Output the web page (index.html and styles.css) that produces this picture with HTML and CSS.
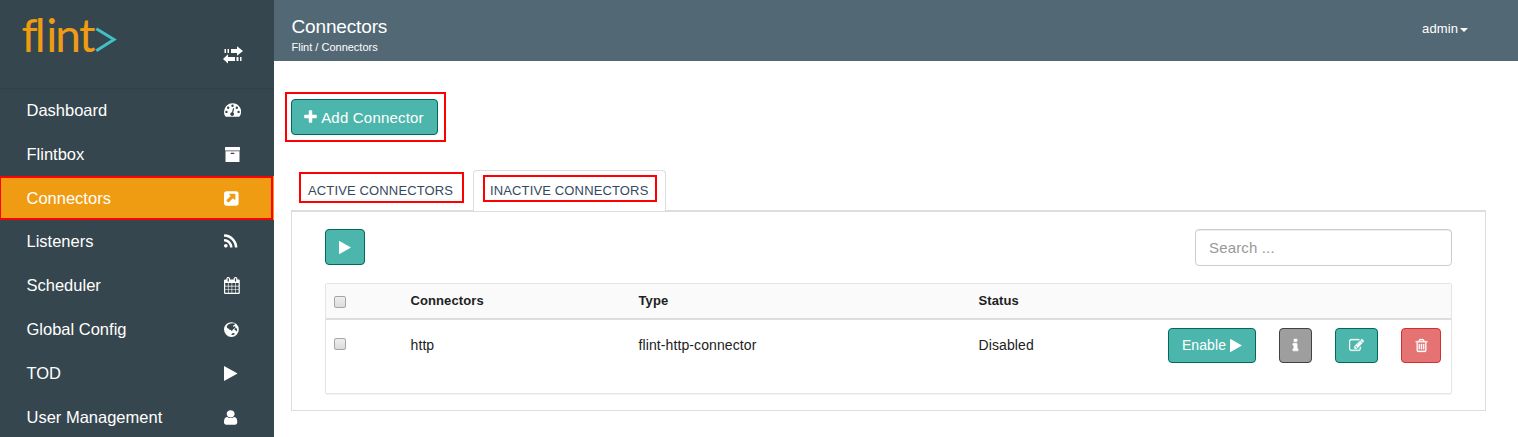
FILE: index.html
```html
<!DOCTYPE html>
<html lang="en">
<head>
<meta charset="utf-8">
<title>Flint - Connectors</title>
<link rel="stylesheet" href="styles.css">
</head>
<body>
<svg class="defs" width="0" height="0">
  <defs>
    <symbol id="play" viewBox="192 0 1792 1792"><path d="M1576 927l-1328 738q-23 13-39.5 3t-16.5-36v-1472q0-26 16.500-36t39.500 3l1328 738q23 13 23 31t-23 31z"/></symbol>
  </defs>
</svg>
<div class="app">
  <aside class="sidebar">
    <div class="brand">
      <svg class="logo" width="100" height="44" viewBox="0 0 100 44">
        <text class="logo-text" x="-0.5 12.800 24.200 33.300 57" y="37">flint</text>
        <path class="logo-mark" d="M74.300 13.800L92 24.500L74.300 35.800"/>
      </svg>
      <svg class="toggle" width="20" height="17" viewBox="0 0 20 17">
        <path d="M1.500 3h1.500v4h-1.500zM4.500 3h1.500v4h-1.500zM8 3h6V.3L20 5l-6 4.700V7H8zM18.500 11h-1.500v4h1.500zM15.500 11h-2v4h2zM12 11H5V8.300L0 13 5 17.500V15h7z"/>
      </svg>
    </div>
    <nav class="menu">
      <a class="item">Dashboard
        <svg class="icon" viewBox="0 0 17 17"><path fill-rule="evenodd" d="M8.500 1.200A8.500 8.500 0 0 0 0 9.700c0 1.600.45 3.250 1.300 4.600.15.250.35.400.7.400h13c.35 0 .55-.15.700-.400A8.500 8.500 0 0 0 8.500 1.200zM2.400 8.700a1.200 1.200 0 1 1 0 2.400 1.200 1.200 0 0 1 0-2.400zM4.200 4.500a1.200 1.200 0 1 1 0 2.400 1.200 1.200 0 0 1 0-2.400zM8.500 2.600a1.200 1.200 0 1 1 0 2.400 1.200 1.200 0 0 1 0-2.400zM12.800 4.500a1.200 1.200 0 1 1 0 2.400 1.200 1.200 0 0 1 0-2.400zM14.600 8.700a1.200 1.200 0 1 1 0 2.400 1.200 1.200 0 0 1 0-2.400zM9.700 6.200c.35.080.5.350.4.700l-.9 3.600a1.900 1.900 0 1 1-1.200-.3l.95-3.600c.1-.35.400-.5.750-.4z"/></svg></a>
      <a class="item">Flintbox
        <svg class="icon" viewBox="0 0 17 17"><path fill-rule="evenodd" d="M1.500 1h14a.5.500 0 0 1 .5.500V4.600H1V1.500A.5.500 0 0 1 1.500 1zM1.500 5.200h14v10.300a.5.500 0 0 1-.5.500H2a.5.500 0 0 1-.5-.5zM7.200 6.800a.6.600 0 0 0 0 1.200h2.600a.6.600 0 0 0 0-1.200z"/></svg></a>
      <a class="item active">Connectors
        <svg class="icon" viewBox="0 0 17 17"><path fill-rule="evenodd" d="M2.700 1.200h9.200a2.700 2.700 0 0 1 2.700 2.700v9.200a2.700 2.700 0 0 1-2.700 2.700H2.700A2.700 2.700 0 0 1 0 13.100V3.900a2.700 2.700 0 0 1 2.700-2.700zM5.800 3.700c-.6 0-.8.6-.4 1l1.300 1.300L2.600 10.100c-.25.250-.25.600 0 .85l1.400 1.400c.25.250.6.250.85 0L9 8.200l1.300 1.300c.4.400 1.100.2 1.100-.4V4.300c0-.35-.25-.6-.6-.6z"/></svg></a>
      <a class="item">Listeners
        <svg class="icon" viewBox="192 0 1792 1792"><path d="M576 1344q0 80-56 136t-136 56-136-56-56-136 56-136 136-56 136 56 56 136zm512 123q2 28-17 48-18 21-47 21h-135q-25 0-43-16.500t-20-41.500q-22-229-184.500-391.500t-391.500-184.500q-25-2-41.500-20t-16.500-43v-135q0-29 21-47 17-17 43-17h5q160 13 306 80.500t259 181.500q114 113 181.500 259t80.500 306zm512 2q2 27-18 47-18 20-46 20h-143q-26 0-44.500-17.500t-19.500-42.500q-12-215-101-408.500t-231.500-336-336-231.500-408.500-102q-25-1-42.500-19.500t-17.500-43.500v-143q0-28 20-46 18-18 44-18h3q262 13 501.500 120t425.500 294q187 186 294 425.500t120 501.500z"/></svg></a>
      <a class="item">Scheduler
        <svg class="icon" viewBox="64 0 1792 1792"><path d="M192 1664h288v-288h-288v288zm352 0h320v-288h-320v288zm-352-352h288v-320h-288v320zm352 0h320v-320h-320v320zm-352-384h288v-288h-288v288zm736 736h320v-288h-320v288zm-384-736h320v-288h-320v288zm768 736h288v-288h-288v288zm-384-352h320v-320h-320v320zm-352-864v-288q0-13-9.500-22.500t-22.500-9.500h-64q-13 0-22.500 9.500t-9.500 22.500v288q0 13 9.500 22.500t22.500 9.500h64q13 0 22.500-9.500t9.500-22.500zm736 864h288v-320h-288v320zm-384-384h320v-288h-320v288zm384 0h288v-288h-288v288zm32-480v-288q0-13-9.500-22.500t-22.500-9.500h-64q-13 0-22.500 9.500t-9.500 22.500v288q0 13 9.500 22.500t22.500 9.500h64q13 0 22.500-9.500t9.500-22.500zm384-64v1280q0 52-38 90t-90 38h-1408q-52 0-90-38t-38-90v-1280q0-52 38-90t90-38h128v-96q0-66 47-113t113-47h64q66 0 113 47t47 113v96h384v-96q0-66 47-113t113-47h64q66 0 113 47t47 113v96h128q52 0 90 38t38 90z"/></svg></a>
      <a class="item">Global Config
        <svg class="icon" viewBox="0 0 17 17"><path fill-rule="evenodd" d="M7.400 1.200a7.400 7.400 0 1 1 0 14.800 7.400 7.400 0 0 1 0-14.800zM6.400 2.600L4.200 3.600 2.800 5.200l.4 1.700 1.200.5.700 1.200 1.700.5 1.100 1.200.8-1.500 1.900-1.500 1.200-1.300-1.100-.7-1.300.5-.6-.8.9-.8 1-.4.300-1.100-1.600-.5zM11.400 7l-.9.900.3 1.200 1.200.4.500 1.200.7-1.800-.4-1.300zM9 12l-1.100.7-.6 1.400 1.800-.1 1.900-.9-.8-.9z"/></svg></a>
      <a class="item">TOD
        <svg class="icon"><use href="#play"/></svg></a>
      <a class="item">User Management
        <svg class="icon" viewBox="256 0 1640 1792" preserveAspectRatio="none"><path d="M1536 1399q0 109-62.500 187t-150.500 78h-854q-88 0-150.500-78t-62.500-187q0-85 8.500-160.500t31.500-152 58.500-131 94-89 134.500-34.500q131 128 313 128t313-128q76 0 134.500 34.500t94 89 58.500 131 31.500 152 8.500 160.500zm-256-887q0 159-112.500 271.500t-271.500 112.500-271.500-112.500-112.500-271.500 112.500-271.500 271.500-112.500 271.500 112.500 112.500 271.500z"/></svg></a>
    </nav>
  </aside>
  <main class="main">
    <header class="topbar">
      <div>
        <h1 class="title">Connectors</h1>
        <div class="crumbs">Flint / Connectors</div>
      </div>
      <div class="account">admin<span class="caret"></span></div>
    </header>
    <div class="content">
      <div class="highlight add-wrap">
        <button class="btn add"><svg class="bicon" viewBox="192 0 1408 1792"><path d="M1600 736v192q0 40-28 68t-68 28h-416v416q0 40-28 68t-68 28h-192q-40 0-68-28t-28-68v-416h-416q-40 0-68-28t-28-68v-192q0-40 28-68t68-28h416v-416q0-40 28-68t68-28h192q40 0 68 28t28 68v416h416q40 0 68 28t28 68z"/></svg>Add Connector</button>
      </div>
      <div class="tabs">
        <div class="tab"><span class="highlight tab-active">ACTIVE CONNECTORS</span></div>
        <div class="tab selected"><span class="highlight tab-inactive">INACTIVE CONNECTORS</span></div>
      </div>
      <section class="panel">
        <div class="tools">
          <button class="btn run"><svg class="bicon"><use href="#play"/></svg></button>
          <input class="search" type="text" placeholder="Search ...">
        </div>
        <div class="table">
          <div class="row head">
            <span class="check"></span><span>Connectors</span><span>Type</span><span>Status</span>
          </div>
          <div class="row body">
            <span class="check"></span><span>http</span><span>flint-http-connector</span><span>Disabled</span>
            <div class="actions">
              <button class="btn enable">Enable<svg class="bicon"><use href="#play"/></svg></button>
              <button class="btn info"><svg class="bicon" viewBox="0 0 1792 1792"><path d="M1216 1344v128q0 26-19 45t-45 19h-512q-26 0-45-19t-19-45v-128q0-26 19-45t45-19h64v-384h-64q-26 0-45-19t-19-45v-128q0-26 19-45t45-19h384q26 0 45 19t19 45v576h64q26 0 45 19t19 45zm-128-1152v192q0 26-19 45t-45 19h-256q-26 0-45-19t-19-45v-192q0-26 19-45t45-19h256q26 0 45 19t19 45z"/></svg></button>
              <button class="btn edit"><svg class="bicon" viewBox="0 0 1792 1792"><path d="M888 1184l116-116-152-152-116 116v56h96v96h56zm440-720q-16-16-33 1l-350 350q-17 17-1 33t33-1l350-350q17-17 1-33zm80 594v190q0 119-84.500 203.500t-203.500 84.500h-832q-119 0-203.500-84.500t-84.500-203.500v-832q0-119 84.500-203.500t203.500-84.500h832q63 0 117 25 15 7 18 23 3 17-9 29l-49 49q-14 14-32 8-23-6-45-6h-832q-66 0-113 47t-47 113v832q0 66 47 113t113 47h832q66 0 113-47t47-113v-126q0-13 9-22l64-64q15-15 35-7t20 29zm-96-738l288 288-672 672h-288v-288zm444 132l-92 92-288-288 92-92q28-28 68-28t68 28l152 152q28 28 28 68t-28 68z"/></svg></button>
              <button class="btn remove"><svg class="bicon" viewBox="0 0 1792 1792"><path d="M704 736v576q0 14-9 23t-23 9h-64q-14 0-23-9t-9-23v-576q0-14 9-23t23-9h64q14 0 23 9t9 23zm256 0v576q0 14-9 23t-23 9h-64q-14 0-23-9t-9-23v-576q0-14 9-23t23-9h64q14 0 23 9t9 23zm256 0v576q0 14-9 23t-23 9h-64q-14 0-23-9t-9-23v-576q0-14 9-23t23-9h64q14 0 23 9t9 23zm128 724v-948h-896v948q0 22 7 40.500t14.500 27 10.500 8.500h832q3 0 10.500-8.500t14.500-27 7-40.500zm-672-1076h448l-48-117q-7-9-17-11h-317q-10 2-17 11zm928 32v64q0 14-9 23t-23 9h-96v948q0 83-47 143.500t-113 60.500h-832q-66 0-113-58.500t-47-141.500v-952h-96q-14 0-23-9t-9-23v-64q0-14 9-23t23-9h309l70-167q15-37 54-63t79-26h320q40 0 79 26t54 63l70 167h309q14 0 23 9t9 23z"/></svg></button>
            </div>
          </div>
        </div>
      </section>
    </div>
  </main>
</div>
</body>
</html>
```

FILE: styles.css
```css
*, *::before, *::after { box-sizing: border-box; }
body {
  margin: 0;
  overflow: hidden;
  background: #fff;
  color: #212121;
  font: 13px/1.4 "Liberation Sans", Arial, sans-serif;
  letter-spacing: .1px;
}
svg { fill: currentColor; display: block; flex: none; }
.defs { position: absolute; }
.app { display: flex; height: 437px; }

/* Sidebar */
.sidebar { width: 274px; flex: none; background: #36464e; color: #fff; overflow: hidden; }
.brand {
  height: 88px;
  padding: 15px 31px 0 22px;
  display: flex;
  justify-content: space-between;
}
.menu { border-top: 1px solid #323f47; }
.logo { overflow: visible; }
.logo-text { font: 46px Lato, sans-serif; fill: #ef9c12; letter-spacing: 0; }
.logo-mark { fill: none; stroke: #3fc1c6; stroke-width: 3; }
.toggle { margin-top: 31px; overflow: visible; }
.item {
  position: relative;
  height: 43.860px;
  padding: 0 33px 0 26.500px;
  display: flex;
  align-items: center;
  justify-content: space-between;
  font-size: 16.500px;
  letter-spacing: 0;
}
.menu .item:first-child { height: 43.300px; }
.icon { width: 17px; height: 17px; }
.active { background: #ef9c12; }
.active::after {
  content: "";
  position: absolute;
  inset: 0 1px 0 -1px;
  border: 2px solid #f00;
}

/* Header */
.main { flex: 1; min-width: 0; }
.topbar {
  height: 61px;
  padding: 15px 50px 0 17.500px;
  display: flex;
  justify-content: space-between;
  background: #526975;
  color: #fff;
}
.title { margin: 0; font-size: 19px; line-height: 24px; font-weight: 400; letter-spacing: -.15px; }
.crumbs { font-size: 11px; line-height: 16px; letter-spacing: 0; }
.account { display: flex; align-items: center; height: 28px; gap: 2px; }
.caret { margin-top: 2px; border: 4px solid transparent; border-top-color: #fff; border-bottom: 0; }

/* Red callout frames */
.highlight { position: relative; }
.highlight::after { content: ""; position: absolute; border: 2px solid #f00; }

/* Buttons */
.btn {
  display: flex;
  align-items: center;
  justify-content: center;
  height: 35px;
  padding: 0;
  color: #fff;
  background: #4db6ac;
  border: 1px solid #00695c;
  border-radius: 4px;
  font: 15px "Liberation Sans", Arial, sans-serif;
  letter-spacing: .1px;
}
.bicon { width: 15px; height: 15px; }

.content { padding: 38px 32px 0 17px; }
.add-wrap { width: 147px; }
.add-wrap::after { inset: -7px -8px -7px -6px; }
.add { width: 147px; height: 36px; gap: 4px; padding-right: 1px; letter-spacing: .2px; }
.add .bicon { width: 13px; height: 16px; }

/* Tabs */
.tabs { display: flex; height: 41px; margin-top: 35px; border-bottom: 1px solid #ddd; }
.tab { width: 182px; padding-left: 17px; line-height: 41px; color: #34495e; letter-spacing: .14px; }
.tab.selected {
  width: 193px;
  height: 41px;
  padding-left: 16px;
  background: #fff;
  border: 1px solid #ddd;
  border-bottom: 0;
  border-radius: 4px 4px 0 0;
  line-height: 39px;
}
.highlight.tab-active, .highlight.tab-inactive { display: block; }
.tab-active::after { left: -9px; top: 2px; width: 165px; height: 31px; }
.tab-inactive::after { left: -7px; top: 4px; width: 174px; height: 27px; }

.panel { height: 200px; padding: 17px 33px 0; border: 1px solid #ddd; }
.tools { display: flex; justify-content: space-between; height: 54px; }
.run { width: 40px; height: 36px; }
.run .bicon { margin-left: 2px; }
.search {
  width: 257px;
  height: 37px;
  padding: 0 13px;
  border: 1px solid #ccc;
  border-radius: 4px;
  box-shadow: inset 0 1px 1px rgba(0, 0, 0, .075);
  font: 15px "Liberation Sans", Arial, sans-serif;
  letter-spacing: .15px;
}
.search::placeholder { color: #999; opacity: 1; }

/* Table */
.table { height: 111px; border: 1px solid #e5e5e5; border-radius: 2px; box-shadow: 0 1px 1px rgba(0, 0, 0, .05); }
.row { display: grid; grid-template-columns: 76.500px 228px 340px 189.500px 1fr; padding-left: 8px; }
.head { height: 36px; line-height: 34px; background: #fafafa; border-bottom: 2px solid #ddd; font-weight: 700; }
.body { padding-top: 8px; line-height: 35px; font-size: 14px; }
.check {
  width: 12px;
  height: 12px;
  margin-top: 12px;
  border: 1px solid #a6a6a6;
  border-radius: 2px;
  background: linear-gradient(#eee, #dcdcdc);
}
.body .check { margin-top: 10px; }
.actions { display: flex; gap: 23px; }
.enable { width: 88px; padding: 0 1px 1px 1px; font-size: 14px; gap: 4px; }
.enable .bicon { margin-right: -3px; }
.info { width: 33px; background: #9e9e9e; border-color: #424242; }
.info .bicon { stroke: currentColor; stroke-width: 70px; }
.edit .bicon, .remove .bicon { stroke: currentColor; stroke-width: 35px; }
.edit { width: 43px; }
.remove { width: 40px; background: #e57373; border-color: #d32f2f; }
```
